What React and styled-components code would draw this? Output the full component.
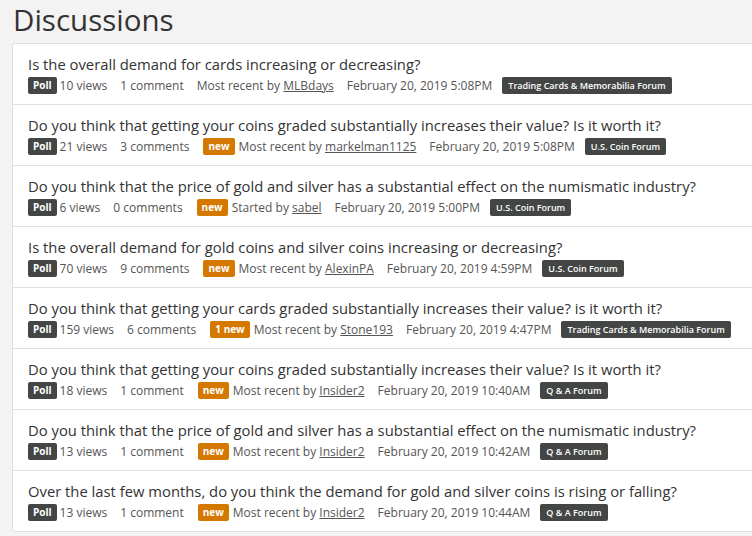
import React from "react";
import styled, { createGlobalStyle } from "styled-components";

const GlobalStyle = createGlobalStyle`
  html, body {
    margin: 0;
    padding: 0;
    background: #f3f3f3;
    font-family: "Open Sans", "Liberation Sans", sans-serif;
    color: #333;
    overflow: hidden;
  }
`;

const Page = styled.div`
  padding: 2px 0 0 12px;
`;

const Heading = styled.h1`
  margin: 0;
  padding: 0 0 0 1px;
  font-size: 29.5px;
  font-weight: 400;
  line-height: 35px;
  color: #333;
`;

const Panel = styled.ul`
  list-style: none;
  margin: 6px -20px 0 0;
  padding: 0;
  background: #fff;
  border: 1px solid #dedede;
  border-radius: 3px;
`;

const Item = styled.li`
  padding: 10px 15px 9px;
  border-top: 1px solid #e0e0e0;
  &:first-child {
    border-top: none;
  }
`;

const Title = styled.div`
  font-size: 14.8px;
  line-height: 21px;
  color: #333;
  white-space: nowrap;
`;

const Meta = styled.div`
  display: flex;
  align-items: center;
  font-size: 12px;
  line-height: 19px;
  color: #555;
  white-space: nowrap;
  margin-top: 1px;
`;

const Label = styled.span`
  display: inline-block;
  background: ${(p) => (p.$orange ? "#d57800" : "#444645")};
  color: #fff;
  font-size: 10px;
  font-weight: 700;
  line-height: 17px;
  padding: 0 5px;
  border-radius: 2px;
  margin-right: ${(p) => p.$mr || 0}px;
  margin-left: ${(p) => p.$ml || 0}px;
`;

const Forum = styled.span`
  display: inline-block;
  background: #444645;
  color: #fff;
  font-size: 9px;
  font-weight: 600;
  line-height: 17px;
  padding: 0 6px;
  border-radius: 2px;
  margin-left: 10px;
`;

const Stat = styled.span`
  margin-right: 13px;
`;

const User = styled.a`
  color: #555;
  text-decoration: underline;
  margin-right: 13px;
`;

const rows = [
  { t: "Is the overall demand for cards increasing or decreasing?", v: "10 views", c: "1 comment", by: "Most recent by", u: "MLBdays", d: "February 20, 2019 5:08PM", f: "Trading Cards & Memorabilia Forum" },
  { t: "Do you think that getting your coins graded substantially increases their value? Is it worth it?", v: "21 views", c: "3 comments", n: "new", by: "Most recent by", u: "markelman1125", d: "February 20, 2019 5:08PM", f: "U.S. Coin Forum" },
  { t: "Do you think that the price of gold and silver has a substantial effect on the numismatic industry?", v: "6 views", c: "0 comments", n: "new", by: "Started by", u: "sabel", d: "February 20, 2019 5:00PM", f: "U.S. Coin Forum" },
  { t: "Is the overall demand for gold coins and silver coins increasing or decreasing?", v: "70 views", c: "9 comments", n: "new", by: "Most recent by", u: "AlexinPA", d: "February 20, 2019 4:59PM", f: "U.S. Coin Forum" },
  { t: "Do you think that getting your cards graded substantially increases their value? is it worth it?", v: "159 views", c: "6 comments", n: "1 new", by: "Most recent by", u: "Stone193", d: "February 20, 2019 4:47PM", f: "Trading Cards & Memorabilia Forum" },
  { t: "Do you think that getting your coins graded substantially increases their value? Is it worth it?", v: "18 views", c: "1 comment", n: "new", by: "Most recent by", u: "Insider2", d: "February 20, 2019 10:40AM", f: "Q & A Forum" },
  { t: "Do you think that the price of gold and silver has a substantial effect on the numismatic industry?", v: "13 views", c: "1 comment", n: "new", by: "Most recent by", u: "Insider2", d: "February 20, 2019 10:42AM", f: "Q & A Forum" },
  { t: "Over the last few months, do you think the demand for gold and silver coins is rising or falling?", v: "13 views", c: "1 comment", n: "new", by: "Most recent by", u: "Insider2", d: "February 20, 2019 10:44AM", f: "Q & A Forum" },
];

export default function App() {
  return (
    <Page>
      <GlobalStyle />
      <Heading>Discussions</Heading>
      <Panel>
        {rows.map((r, i) => (
          <Item key={i}>
            <Title>{r.t}</Title>
            <Meta>
              <Label $mr={3}>Poll</Label>
              <Stat>{r.v}</Stat>
              <Stat>{r.c}</Stat>
              {r.n && (
                <Label $orange $ml={1} $mr={4}>
                  {r.n}
                </Label>
              )}
              <span>{r.by}&nbsp;</span>
              <User>{r.u}</User>
              <span>{r.d}</span>
              <Forum>{r.f}</Forum>
            </Meta>
          </Item>
        ))}
      </Panel>
    </Page>
  );
}
